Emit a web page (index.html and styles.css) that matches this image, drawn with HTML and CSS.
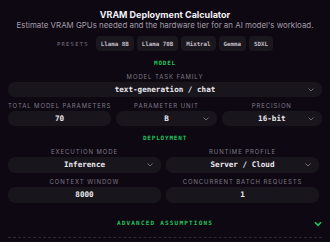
FILE: index.html
```html
<!DOCTYPE html>
<html lang="en">
<head>
  <meta charset="UTF-8" />
  <meta name="viewport" content="width=device-width, initial-scale=1.0"/>
  <title>VRAM Deployment Calculator</title>
  <link rel="stylesheet" href="styles.css">
</head>
<body>
  <div class="card">
    <header>
      <h1>VRAM Deployment Calculator</h1>
      <p class="subtitle">Estimate VRAM GPUs needed and the hardware tier for an AI model's workload.</p>
      <div class="presets">
        <span class="presets-label">PRESETS</span>
        <button class="chip">Llama 8B</button>
        <button class="chip">Llama 70B</button>
        <button class="chip">Mixtral</button>
        <button class="chip">Gemma</button>
        <button class="chip">SDXL</button>
      </div>
    </header>

    <section class="group">
      <h2>MODEL</h2>
      <div class="field">
        <label>MODEL TASK FAMILY</label>
        <div class="control select">text-generation / chat
          <svg class="chev" width="6" height="4" viewBox="0 0 6 4"><path d="M0.5 0.5 L3 3 L5.5 0.5" fill="none" stroke="#6f6876" stroke-width="1"/></svg>
        </div>
      </div>
      <div class="row three">
        <div class="field">
          <label>TOTAL MODEL PARAMETERS</label>
          <div class="control">70</div>
        </div>
        <div class="field">
          <label>PARAMETER UNIT</label>
          <div class="control select">B
            <svg class="chev" width="6" height="4" viewBox="0 0 6 4"><path d="M0.5 0.5 L3 3 L5.5 0.5" fill="none" stroke="#6f6876" stroke-width="1"/></svg>
          </div>
        </div>
        <div class="field">
          <label>PRECISION</label>
          <div class="control select">16-bit
            <svg class="chev" width="6" height="4" viewBox="0 0 6 4"><path d="M0.5 0.5 L3 3 L5.5 0.5" fill="none" stroke="#6f6876" stroke-width="1"/></svg>
          </div>
        </div>
      </div>
    </section>

    <section class="group">
      <h2>DEPLOYMENT</h2>
      <div class="row two">
        <div class="field">
          <label>EXECUTION MODE</label>
          <div class="control select">Inference
            <svg class="chev" width="6" height="4" viewBox="0 0 6 4"><path d="M0.5 0.5 L3 3 L5.5 0.5" fill="none" stroke="#6f6876" stroke-width="1"/></svg>
          </div>
        </div>
        <div class="field">
          <label>RUNTIME PROFILE</label>
          <div class="control select">Server / Cloud
            <svg class="chev" width="6" height="4" viewBox="0 0 6 4"><path d="M0.5 0.5 L3 3 L5.5 0.5" fill="none" stroke="#6f6876" stroke-width="1"/></svg>
          </div>
        </div>
      </div>
      <div class="row two">
        <div class="field">
          <label>CONTEXT WINDOW</label>
          <div class="control">8000</div>
        </div>
        <div class="field">
          <label>CONCURRENT BATCH REQUESTS</label>
          <div class="control">1</div>
        </div>
      </div>
    </section>

    <div class="advanced">
      <span>ADVANCED ASSUMPTIONS</span>
      <svg class="adv-chev" width="8" height="6" viewBox="0 0 8 6"><path d="M1 1.2 L4 4.4 L7 1.2" fill="none" stroke="#22c55e" stroke-width="1.6"/></svg>
    </div>
    <div class="results"></div>
  </div>
</body>
</html>
```

FILE: styles.css
```css
body {
  margin: 0;
  background-color: #0c0710;
  font-family: Inter, "Noto Sans", sans-serif;
  color: #e8e6ea;
}

.card {
  padding: 9px 8px 0 8px;
  background-color: #0d0812;
  min-height: 242px;
  box-sizing: border-box;
}

header {
  text-align: center;
}

h1 {
  margin: 0;
  font-size: 9px;
  line-height: 11px;
  font-weight: 700;
  color: #f2f0f4;
}

.subtitle {
  margin: 0;
  font-size: 7.9px;
  line-height: 10px;
  color: #a39da9;
  white-space: nowrap;
}

.presets {
  display: flex;
  justify-content: center;
  align-items: center;
  gap: 3px;
  margin-top: 6px;
}

.presets-label {
  font-family: "DejaVu Sans Mono", monospace;
  font-size: 5.4px;
  letter-spacing: 1.3px;
  color: #7f7985;
  margin-right: 4px;
}

.chip {
  height: 15px;
  padding: 0 5px;
  border: none;
  border-radius: 4px;
  background-color: #1a171e;
  color: #c3bfc7;
  font-family: "DejaVu Sans Mono", monospace;
  font-size: 5.8px;
  font-weight: 700;
}

.group h2 {
  margin: 7px 0 0 0;
  text-align: center;
  font-family: "DejaVu Sans Mono", monospace;
  font-size: 6px;
  line-height: 10px;
  font-weight: 700;
  letter-spacing: 0.8px;
  color: #22c55e;
}

.field {
  display: flex;
  flex-direction: column;
  margin-top: 4px;
}

.field label {
  text-align: center;
  font-size: 6px;
  line-height: 9px;
  letter-spacing: 0.9px;
  color: #7f7985;
  margin-bottom: 1px;
  white-space: nowrap;
}

.control {
  position: relative;
  height: 15px;
  line-height: 15px;
  border-radius: 7px;
  background-color: #19151d;
  text-align: center;
  font-family: "DejaVu Sans Mono", monospace;
  font-size: 7.6px;
  font-weight: 700;
  color: #ece9ef;
}

.chev {
  position: absolute;
  right: 8px;
  top: 6px;
}

.row {
  display: grid;
  gap: 5px;
}

.row.three {
  grid-template-columns: 1fr 1fr 1fr;
}

.row.two {
  grid-template-columns: 1fr 1fr;
  margin-right: 3px;
}

.row.two .control {
  height: 16px;
  line-height: 16px;
}

.advanced {
  position: relative;
  margin-top: 15px;
  text-align: center;
  font-family: "DejaVu Sans Mono", monospace;
  font-size: 6px;
  line-height: 10px;
  font-weight: 700;
  letter-spacing: 1.2px;
  color: #22c55e;
}

.adv-chev {
  position: absolute;
  right: 0;
  top: 3px;
}

.results {
  margin-top: 9px;
  border-top: 1px dashed #2e2834;
}
```
